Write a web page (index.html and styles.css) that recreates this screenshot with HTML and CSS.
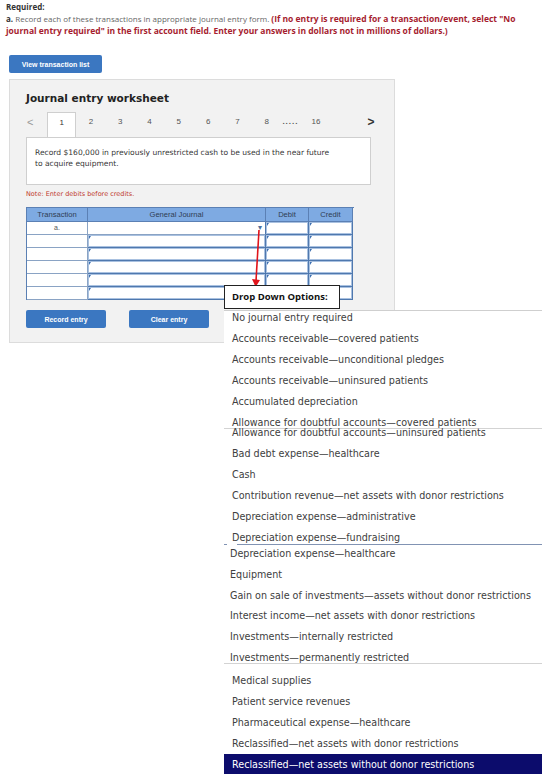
FILE: index.html
```html
<!DOCTYPE html>
<html lang="en">
<head>
    <meta charset="UTF-8">
    <meta name="viewport" content="width=device-width, initial-scale=1.0">
    <title>Journal Entry Worksheet</title>
    <link rel="stylesheet" href="styles.css">
</head>

<body>
<div class="page">

    <!-- Instructions -->
    <div class="intro">
        <p class="req">Required:</p>
        <p><b class="part">a.</b> Record each of these transactions in appropriate journal entry form. <span class="warn">(If no entry is required for a transaction/event, select "No journal entry required" in the first account field. Enter your answers in dollars not in millions of dollars.)</span></p>
    </div>

    <button class="btn btn-list">View transaction list</button>

    <!-- Worksheet panel -->
    <div class="panel">
        <h2 class="ws-title">Journal entry worksheet</h2>

        <div class="tabs">
            <span class="arrow prev">&lt;</span>
            <span class="tab active">1</span>
            <span class="tab">2</span>
            <span class="tab">3</span>
            <span class="tab">4</span>
            <span class="tab">5</span>
            <span class="tab">6</span>
            <span class="tab">7</span>
            <span class="tab">8</span>
            <span class="dots">.....</span>
            <span class="tab-last">16</span>
            <span class="arrow next">&gt;</span>
        </div>

        <div class="desc">
            Record $160,000 in previously unrestricted cash to be used in the near future<br>
            to acquire equipment.
        </div>

        <p class="note">Note: Enter debits before credits.</p>

        <div class="jtable">
            <div class="th">Transaction</div>
            <div class="th">General Journal</div>
            <div class="th">Debit</div>
            <div class="th">Credit</div>

            <div class="td tr-cell">a.</div>
            <div class="td select"><span class="caret">&#9662;</span></div>
            <div class="td in"></div>
            <div class="td in"></div>

            <div class="td"></div><div class="td in"></div><div class="td in"></div><div class="td in"></div>
            <div class="td"></div><div class="td in"></div><div class="td in"></div><div class="td in"></div>
            <div class="td"></div><div class="td in"></div><div class="td in"></div><div class="td in"></div>
            <div class="td"></div><div class="td in"></div><div class="td in"></div><div class="td in"></div>
            <div class="td"></div><div class="td in"></div><div class="td in"></div><div class="td in"></div>
        </div>

        <div class="actions">
            <button class="btn btn-entry">Record entry</button>
            <button class="btn btn-entry">Clear entry</button>
        </div>
    </div>

    <!-- pointer from the account select to the options list -->
    <svg class="pointer" width="20" height="62" viewBox="0 0 20 62">
        <line x1="11" y1="1" x2="8" y2="52" stroke="#e0141b" stroke-width="1.6"/>
        <polygon points="4,50 12,51 7.6,58" fill="#e0141b"/>
    </svg>

    <!-- Options of the account select -->
    <div class="dropdown">
        <div class="dd-label">Drop Down Options:</div>
        <div class="seg seg-a">
            <div class="opt">No journal entry required</div>
            <div class="opt">Accounts receivable—covered patients</div>
            <div class="opt">Accounts receivable—unconditional pledges</div>
            <div class="opt">Accounts receivable—uninsured patients</div>
            <div class="opt">Accumulated depreciation</div>
            <div class="opt">Allowance for doubtful accounts—covered patients</div>
        </div>
        <div class="cut cut-grey"></div>
        <div class="seg seg-b">
            <div class="opt">Allowance for doubtful accounts—uninsured patients</div>
            <div class="opt">Bad debt expense—healthcare</div>
            <div class="opt">Cash</div>
            <div class="opt">Contribution revenue—net assets with donor restrictions</div>
            <div class="opt">Depreciation expense—administrative</div>
            <div class="opt">Depreciation expense—fundraising</div>
        </div>
        <div class="cut cut-blue"></div>
        <div class="seg seg-c">
            <div class="opt">Depreciation expense—healthcare</div>
            <div class="opt">Equipment</div>
            <div class="opt">Gain on sale of investments—assets without donor restrictions</div>
            <div class="opt">Interest income—net assets with donor restrictions</div>
            <div class="opt">Investments—internally restricted</div>
            <div class="opt">Investments—permanently restricted</div>
        </div>
        <div class="cut cut-grey"></div>
        <div class="seg seg-d">
            <div class="opt">Medical supplies</div>
            <div class="opt">Patient service revenues</div>
            <div class="opt">Pharmaceutical expense—healthcare</div>
            <div class="opt">Reclassified—net assets with donor restrictions</div>
            <div class="opt selected">Reclassified—net assets without donor restrictions</div>
        </div>
    </div>

</div>
</body>
</html>
```

FILE: styles.css
```css
body {
    margin: 0;
    background-color: #fff;
    font-family: "Liberation Sans", Arial, sans-serif;
    color: #333;
    overflow: hidden;
}

p {
    margin: 0;
}

.page {
    position: relative;
    height: 774px;
}

/* Instructions */
.intro {
    padding: 1px 24px 0 6px;
    font-family: "Open Sans", Arial, sans-serif;
    font-size: 8px;
    line-height: 12px;
    color: #666;
}

.intro .req {
    font-weight: bold;
    color: #333;
}

.intro .part {
    color: #333;
}

.warn {
    color: #a61d2f;
    font-weight: bold;
    font-size: 8.5px;
}

/* Buttons */
.btn {
    display: block;
    border: none;
    border-radius: 2px;
    background-color: #3b77c1;
    color: #fff;
    font-family: "Liberation Sans", Arial, sans-serif;
    font-weight: bold;
    font-size: 7px;
    padding: 0;
    cursor: pointer;
}

.btn-list {
    margin: 18px 0 0 9px;
    width: 93px;
    height: 18px;
}

/* Worksheet panel */
.panel {
    margin: 6px 0 0 9px;
    width: 386px;
    height: 264px;
    box-sizing: border-box;
    background-color: #f2f2f2;
    border: 1px solid #dcdcdc;
    padding: 11px 16px 0;
}

.ws-title {
    margin: 0;
    font-family: "DejaVu Sans", Verdana, sans-serif;
    font-size: 10.5px;
    line-height: 14px;
    color: #222;
}

.tabs {
    display: flex;
    align-items: stretch;
    height: 25px;
    margin-top: 7px;
    font-size: 8px;
    color: #555;
}

.tabs span {
    display: flex;
    align-items: center;
    justify-content: center;
    padding-bottom: 6px;
}

.arrow.prev {
    width: 20px;
    justify-content: flex-start;
    padding-left: 1px;
    font-size: 11px;
    color: #999;
}

.tab {
    width: 29.3px;
}

.tab.active {
    box-sizing: border-box;
    background-color: #fff;
    border: 1px solid #cfcfcf;
    border-bottom: none;
    color: #333;
}

.dots {
    margin-left: 1px;
    letter-spacing: 1px;
    font-weight: bold;
}

.tab-last {
    margin-left: 13px;
}

.arrow.next {
    margin-left: auto;
    width: 14px;
    font-size: 12px;
    font-weight: bold;
    color: #333;
}

.desc {
    width: 345px;
    height: 48px;
    box-sizing: border-box;
    background-color: #fff;
    border: 1px solid #cfcfcf;
    padding: 9px 8px 0;
    font-family: "DejaVu Sans", Verdana, sans-serif;
    font-size: 7.55px;
    line-height: 11px;
    color: #333;
}

.note {
    margin-top: 4px;
    font-family: "DejaVu Sans", Verdana, sans-serif;
    font-size: 6.5px;
    line-height: 10px;
    color: #c0392b;
}

/* Journal table */
.jtable {
    display: grid;
    grid-template-columns: 61px 178px 43px 44px;
    grid-template-rows: 14px repeat(6, 13px);
    width: 327px;
    margin-top: 8px;
    border-top: 1px solid #5b80b4;
    border-left: 1px solid #5b80b4;
}

.th,
.td {
    border-right: 1px solid #5b80b4;
    border-bottom: 1px solid #5b80b4;
}

.th {
    background-color: #7eaae2;
    font-size: 7.6px;
    line-height: 13px;
    text-align: center;
    color: #2f3d52;
}

.td {
    position: relative;
    background-color: #fff;
    border-right-color: #8aa3c4;
    border-bottom-color: #8aa3c4;
}

.td.tr-cell {
    font-size: 7px;
    line-height: 12px;
    text-align: center;
    color: #555;
}

.td.in {
    border-color: #4f78ae;
    box-shadow: inset 0 0 0 1px #a9c1e0;
}

.td.in::before {
    content: "";
    position: absolute;
    top: 1px;
    left: 1px;
    border-left: 2px solid #3d6fb0;
    border-bottom: 3px solid transparent;
}

.td.select {
    border-right-color: #4f78ae;
}

.caret {
    position: absolute;
    right: 3px;
    top: 1px;
    font-size: 8px;
    line-height: 10px;
    color: #4d6f9c;
}

.actions {
    display: flex;
    gap: 23px;
    margin-top: 10px;
}

.btn-entry {
    width: 80px;
    height: 18px;
}

/* Red pointer */
.pointer {
    position: absolute;
    left: 248px;
    top: 229px;
}

/* Options list */
.dropdown {
    position: absolute;
    left: 224px;
    top: 310px;
    width: 318px;
    background-color: #fff;
    border-top: 1px solid #cfcfcf;
    font-family: "DejaVu Sans", Verdana, sans-serif;
    font-size: 9.6px;
    color: #404040;
}

.dd-label {
    position: absolute;
    left: 0;
    top: -26px;
    width: 116px;
    height: 24px;
    box-sizing: border-box;
    background-color: #fff;
    border: 1px solid #222;
    padding-left: 7px;
    font-family: "Open Sans", sans-serif;
    font-weight: bold;
    font-size: 9.5px;
    line-height: 22px;
    color: #111;
}

.seg {
    overflow: hidden;
}

.opt {
    height: 21px;
    line-height: 21px;
    padding-left: 8px;
    white-space: nowrap;
}

.seg-a {
    height: 117px;
}

.seg-a .opt:first-child {
    margin-top: -4px;
}

/* this block may run up over the cut line above it, but not past its own bottom */
.seg-b {
    display: flow-root;
    height: 115px;
    overflow: visible;
    clip-path: inset(-8px 0 0 0);
}

.seg-b .opt:first-child {
    margin-top: -7px;
}

.seg-c {
    height: 118px;
}

.seg-c .opt {
    padding-left: 6px;
    height: 20.8px;
    line-height: 20.8px;
}

.seg-c .opt:first-child {
    margin-top: -1px;
}

.seg-d {
    height: 110px;
}

.seg-d .opt:first-child {
    margin-top: 6px;
}

.opt.selected {
    background-color: #0c0c6c;
    color: #fff;
}

.cut {
    height: 1px;
}

.cut-grey {
    background-color: #d3d3d3;
}

.cut-blue {
    background: linear-gradient(to right, #8193b3 0 3px, transparent 3px 13px, #8193b3 13px);
}
```
